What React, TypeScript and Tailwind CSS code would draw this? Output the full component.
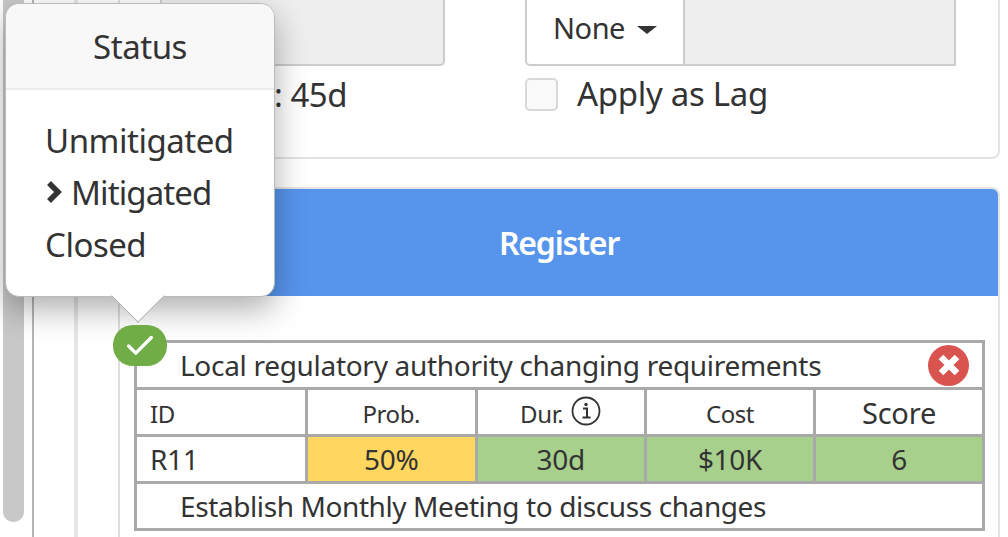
import React from 'react';
import { Check } from 'lucide-react';

const Cell = ({ className = '', children }: { className?: string; children: React.ReactNode }) => (
  <div className={`flex items-center justify-center border-r-[3px] border-[#a9a9a9] last:border-r-0 ${className}`}>{children}</div>
);

export default function App() {
  return (
    <div className="relative flex h-[537px] w-[1008px] overflow-hidden bg-white text-[#333] font-['Noto_Sans',sans-serif] tracking-[-0.48px]">
      {/* scrollbar */}
      <div className="ml-[3px] h-[522px] w-[21px] shrink-0 rounded-b-[10px] bg-[#c8c8c8]" />
      {/* nested rails */}
      <div className="ml-[8px] flex h-full flex-1 border-l-2 border-[#b5b5b5]">
        <div className="ml-[40px] flex flex-1 border-l-4 border-[#e6e6e6]">
          <div className="ml-[40px] flex flex-1 flex-col border-l-2 border-[#dedede]">
            {/* top card */}
            <div className="mr-[8px] h-[159px] rounded-br-lg border-b-2 border-r-2 border-[#e3e3e3] pl-[40px]">
              <div className="flex">
                <div className="flex w-[285px] flex-col">
                  <div className="h-[66px] rounded-b-[5px] border-x-2 border-b-2 border-[#cccccc] bg-[#eeeeee]" />
                  <div className="mt-[9px] pr-[98px] text-right text-[33px] leading-[40px]">: 45d</div>
                </div>
                <div className="ml-[80px] flex w-[431px] flex-col">
                  <div className="flex h-[66px] rounded-bl-[5px] border-x-2 border-b-2 border-[#cccccc]">
                    <div className="flex w-[158px] items-center justify-center gap-[12px] border-r-2 border-[#cccccc] pb-[8px] text-[29px]">
                      None
                      <span className="mt-[3px] h-0 w-0 border-x-[10px] border-t-[8px] border-x-transparent border-t-[#333]" />
                    </div>
                    <div className="flex-1 bg-[#eeeeee]" />
                  </div>
                  <div className="mt-[8px] flex items-center gap-[19px]">
                    <div className="h-[33px] w-[33px] rounded-[5px] border-2 border-[#d8d8d8] bg-[#fafafa]" />
                    <span className="text-[33px] leading-[40px] tracking-[-0.3px]">Apply as Lag</span>
                  </div>
                </div>
              </div>
            </div>
            {/* register card */}
            <div className="mr-[8px] mt-[28px] flex flex-1 flex-col rounded-tr-lg border-r-2 border-t-2 border-[#e3e3e3]">
              <div className="flex h-[107px] items-center justify-center rounded-tr-md bg-[#5794ec] text-[32px] font-semibold tracking-[-1.2px] text-white">
                Register
              </div>
              <div className="ml-[14px] mr-[13px] mt-[44px] border-[3px] border-[#a9a9a9] bg-white text-[28px] tracking-[-0.3px]">
                <div className="flex h-[47px] items-center justify-between border-b-[3px] border-[#a9a9a9] pl-[43px] pr-[13px]">
                  <span>Local regulatory authority changing requirements</span>
                  <span className="flex h-[41px] w-[41px] items-center justify-center rounded-full bg-[#d9534f]">
                    <svg width="24" height="24" viewBox="0 0 24 24" className="text-white">
                      <path d="M4 4 20 20M20 4 4 20" stroke="currentColor" strokeWidth="6.5" fill="none" />
                    </svg>
                  </span>
                </div>
                <div className="grid h-[47px] grid-cols-[171px_169.5px_169.5px_169px_1fr] border-b-[3px] border-[#a9a9a9] text-[24px] tracking-[-0.4px]">
                  <Cell className="justify-start pl-[13px] pt-[3px]">ID</Cell>
                  <Cell className="pt-[3px]">Prob.</Cell>
                  <Cell className="pt-[3px]">
                    Dur.
                    <svg width="30" height="30" viewBox="0 0 30 30" fill="none" stroke="currentColor" className="mb-[5px] ml-[8px]">
                      <circle cx="15" cy="15" r="13.5" strokeWidth="1.8" />
                      <path d="M12 12.5h4v9M11.5 21.5h8" strokeWidth="2" />
                      <circle cx="15" cy="8.5" r="1.7" fill="currentColor" stroke="none" />
                    </svg>
                  </Cell>
                  <Cell className="pt-[3px]">Cost</Cell>
                  <Cell className="pt-[1px] text-[29px] tracking-[-0.2px]">Score</Cell>
                </div>
                <div className="grid h-[47px] grid-cols-[171px_169.5px_169.5px_169px_1fr] border-b-[3px] border-[#a9a9a9]">
                  <Cell className="justify-start pl-[13px]">R11</Cell>
                  <Cell className="bg-[#ffd65f]">50%</Cell>
                  <Cell className="bg-[#a8d08d]">30d</Cell>
                  <Cell className="bg-[#a8d08d]">$10K</Cell>
                  <Cell className="bg-[#a8d08d]">6</Cell>
                </div>
                <div className="flex h-[44px] items-center pl-[43px] tracking-[-0.4px]">Establish Monthly Meeting to discuss changes</div>
              </div>
            </div>
          </div>
        </div>
      </div>
      {/* popover */}
      <div className="absolute left-[5px] top-[3px] h-[294px] w-[270px] rounded-[14px] border border-[#bbb] bg-white shadow-[0_12px_32px_rgba(0,0,0,0.32)]">
        <div className="absolute left-[113px] top-[273px] h-[38px] w-[38px] rotate-45 border-b border-r border-[#aaa] bg-white" />
        <div className="relative flex h-[86px] items-center justify-center rounded-t-[14px] border-b-2 border-[#ececec] bg-[#f8f8f8] pt-[2px] text-[33px]">Status</div>
        <div className="relative mt-[25px] flex flex-col pl-[39px] text-[33px] leading-[52px]">
          <div>Unmitigated</div>
          <div className="flex items-center tracking-[-0.9px]">
            <svg width="17" height="24" viewBox="0 0 17 24" fill="none" stroke="currentColor" className="ml-[1px] mt-[-2px]">
              <path d="M3 3 12 12 3 21" strokeWidth="5.5" />
            </svg>
            <span className="ml-[8px]">Mitigated</span>
          </div>
          <div>Closed</div>
        </div>
      </div>
      {/* status badge */}
      <div className="absolute left-[113px] top-[325px] flex h-[41px] w-[54px] items-center justify-center rounded-[20px] bg-[#70ad47]">
        <Check size={34} strokeWidth={2.4} className="text-white" />
      </div>
    </div>
  );
}
